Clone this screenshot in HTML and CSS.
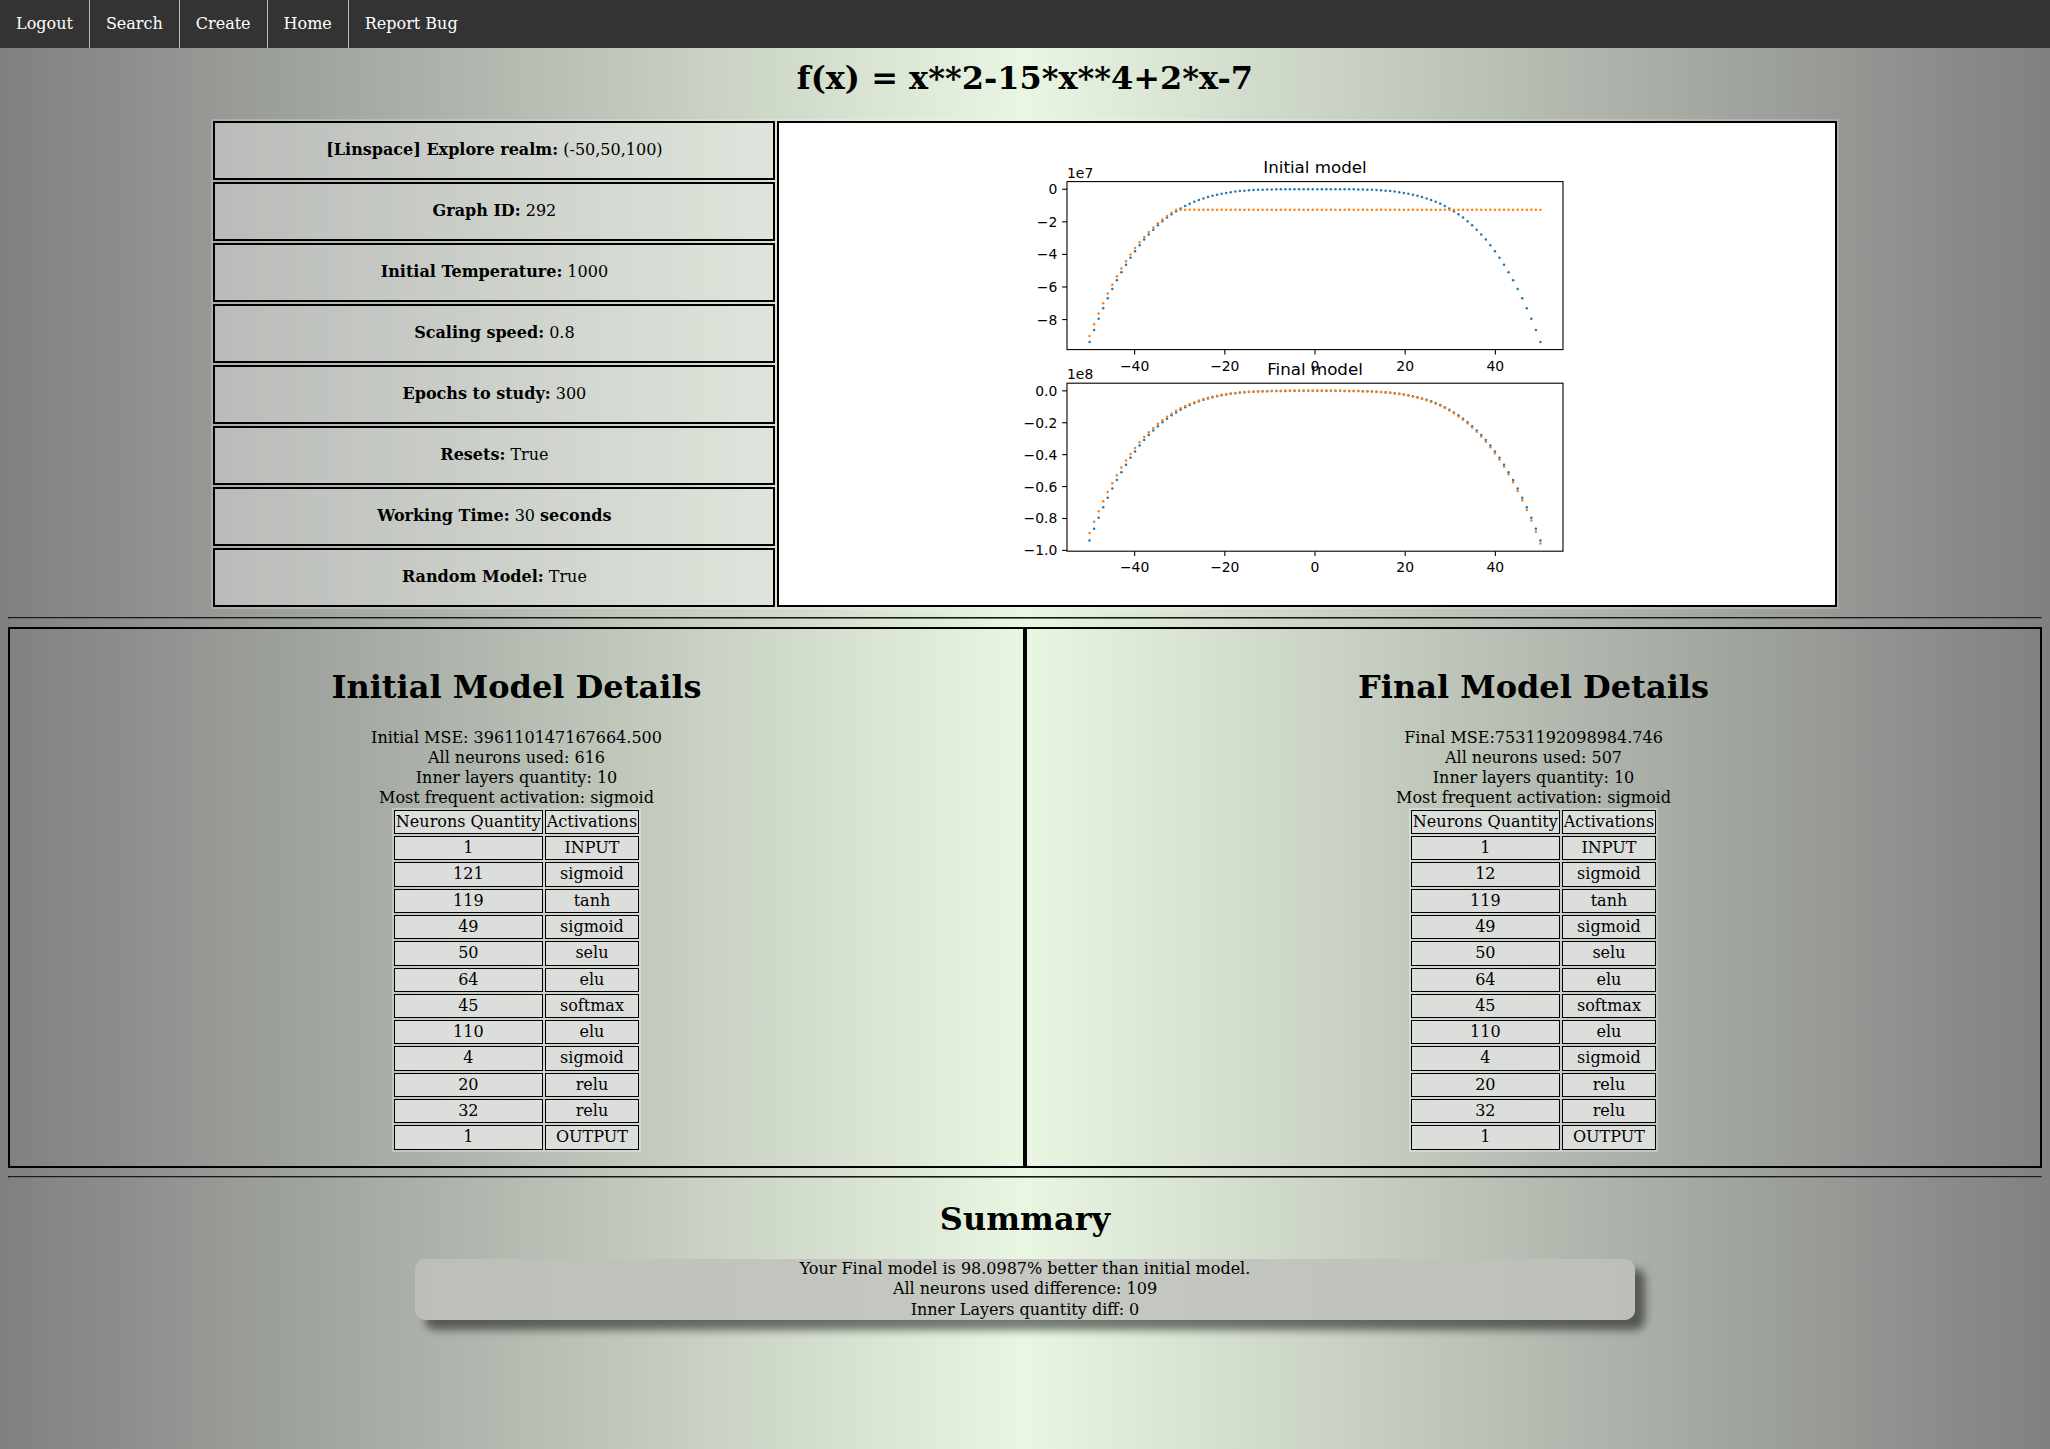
FILE: index.html
```html
<!DOCTYPE html>
<html>
<head>
<meta charset="utf-8">
<title>Graph 292</title>
<link rel="stylesheet" href="styles.css">
</head>
<body>
<ul class="nav">
  <li><a href="#">Logout</a></li>
  <li><a href="#">Search</a></li>
  <li><a href="#">Create</a></li>
  <li><a href="#">Home</a></li>
  <li><a href="#">Report Bug</a></li>
</ul>
<div class="page">
  <h1 class="title">f(x) = x**2-15*x**4+2*x-7</h1>
  <table class="info">
    <tr>
      <td class="param"><b>[Linspace] Explore realm:</b> (-50,50,100)</td>
      <td class="graph" rowspan="8">
        <svg id="plot" class="plot" width="640" height="480" viewBox="0 0 640 480" xmlns="http://www.w3.org/2000/svg">
          <rect x="0" y="0" width="640" height="480" fill="#fff"/>
        </svg>
      </td>
    </tr>
    <tr><td class="param"><b>Graph ID:</b> 292</td></tr>
    <tr><td class="param"><b>Initial Temperature:</b> 1000</td></tr>
    <tr><td class="param"><b>Scaling speed:</b> 0.8</td></tr>
    <tr><td class="param"><b>Epochs to study:</b> 300</td></tr>
    <tr><td class="param"><b>Resets:</b> True</td></tr>
    <tr><td class="param"><b>Working Time:</b> 30 <b>seconds</b></td></tr>
    <tr><td class="param"><b>Random Model:</b> True</td></tr>
  </table>
  <hr>
  <div class="details">
    <div class="model">
      <h1>Initial Model Details</h1>
      <div class="stats">Initial MSE: 396110147167664.500<br>All neurons used: 616<br>Inner layers quantity: 10<br>Most frequent activation: sigmoid</div>
      <table class="layers">
        <tr><td>Neurons Quantity</td><td>Activations</td></tr>
        <tr><td>1</td><td>INPUT</td></tr>
        <tr><td>121</td><td>sigmoid</td></tr>
        <tr><td>119</td><td>tanh</td></tr>
        <tr><td>49</td><td>sigmoid</td></tr>
        <tr><td>50</td><td>selu</td></tr>
        <tr><td>64</td><td>elu</td></tr>
        <tr><td>45</td><td>softmax</td></tr>
        <tr><td>110</td><td>elu</td></tr>
        <tr><td>4</td><td>sigmoid</td></tr>
        <tr><td>20</td><td>relu</td></tr>
        <tr><td>32</td><td>relu</td></tr>
        <tr><td>1</td><td>OUTPUT</td></tr>
      </table>
    </div>
    <div class="model">
      <h1>Final Model Details</h1>
      <div class="stats">Final MSE:7531192098984.746<br>All neurons used: 507<br>Inner layers quantity: 10<br>Most frequent activation: sigmoid</div>
      <table class="layers">
        <tr><td>Neurons Quantity</td><td>Activations</td></tr>
        <tr><td>1</td><td>INPUT</td></tr>
        <tr><td>12</td><td>sigmoid</td></tr>
        <tr><td>119</td><td>tanh</td></tr>
        <tr><td>49</td><td>sigmoid</td></tr>
        <tr><td>50</td><td>selu</td></tr>
        <tr><td>64</td><td>elu</td></tr>
        <tr><td>45</td><td>softmax</td></tr>
        <tr><td>110</td><td>elu</td></tr>
        <tr><td>4</td><td>sigmoid</td></tr>
        <tr><td>20</td><td>relu</td></tr>
        <tr><td>32</td><td>relu</td></tr>
        <tr><td>1</td><td>OUTPUT</td></tr>
      </table>
    </div>
  </div>
  <hr>
  <h1 class="sum-title">Summary</h1>
  <div class="summary">Your Final model is 98.0987% better than initial model.<br>All neurons used difference: 109<br>Inner Layers quantity diff: 0</div>
</div>
<script src="script.js"></script>
</body>
</html>
```

FILE: styles.css
```css
html {
  margin: 0;
}
body {
  margin: 0;
  min-height: 1449px;
  font-family: "DejaVu Serif", serif;
  font-size: 16px;
  line-height: 20.3px;
  color: #000;
  background: linear-gradient(to right, #808080 0%, #e9f6e2 50%, #808080 100%);
}
.nav {
  display: flex;
  margin: 0;
  padding: 0;
  list-style: none;
  background: #333;
}
.nav a {
  display: block;
  padding: 14px 16px;
  line-height: 20.4px;
  color: #fff;
  text-decoration: none;
  border-right: 1px solid #bbb;
}
.nav li:last-child a {
  border-right: none;
}
.page {
  padding: 0 8px;
}
h1 {
  font-size: 32px;
  line-height: 38px;
  text-align: center;
  margin: 21.44px 0;
}
.title {
  margin-top: 11px;
}
.info {
  width: 80%;
  margin: 0 auto;
  border-spacing: 2px;
  background: rgba(255, 255, 255, 0.2);
}
.info td {
  border: 2px solid #000;
  text-align: center;
}
.param {
  width: 558px;
  padding: 1px 0;
  background: rgba(255, 255, 255, 0.18);
}
.graph {
  padding: 1px 0;
  background: #fff;
}
.plot {
  display: block;
  margin: 0 auto;
}
.tick {
  font-family: "DejaVu Sans", sans-serif;
  font-size: 13.9px;
  fill: #000;
}
.ptitle {
  font-family: "DejaVu Sans", sans-serif;
  font-size: 16.7px;
  fill: #000;
}
hr {
  margin: 8px 0;
  border: 1px inset #6e6e6e;
}
.details {
  display: flex;
}
.model {
  flex: 1;
  border: 2px solid #000;
  padding: 18px 0 14.5px;
  text-align: center;
}
.stats {
  line-height: 20px;
}
.layers {
  margin: 0 auto;
  border-spacing: 2px;
  background: rgba(255, 255, 255, 0.3);
}
.layers td {
  border: 1px solid #000;
  padding: 1px;
  background: #dcdedb;
}
.summary {
  width: 60%;
  margin: 0 auto;
  text-align: center;
  border-radius: 10px;
  background: rgba(192, 193, 188, 0.85);
  box-shadow: 10px 10px 8px rgba(0, 0, 0, 0.5);
}
```

FILE: script.js
```js
(function () {
  var NS = 'http://www.w3.org/2000/svg';
  var svg = document.getElementById('plot');
  function f(x) { return x * x - 15 * Math.pow(x, 4) + 2 * x - 7; }
  var xs = [];
  for (var i = 0; i < 100; i++) xs.push(-50 + 100 * i / 99);
  var blue = xs.map(f);
  var oInit = xs.map(function (x) { return x < -30.5 ? f(x + 0.5) : -1.263e7; });
  var oFinal = xs.map(function (x) { return f(x + 0.45) * 0.985; });
  var L = 80, W = 496, H = 168;
  var xmin = -55, xmax = 55;
  function X(v) { return L + (v - xmin) / (xmax - xmin) * W; }
  function el(tag, attrs, parent, text) {
    var e = document.createElementNS(NS, tag);
    for (var k in attrs) e.setAttribute(k, attrs[k]);
    if (text != null) e.textContent = text;
    (parent || svg).appendChild(e);
    return e;
  }
  function panel(top, series, ticks, labels, offset, title) {
    var lo = Infinity, hi = -Infinity;
    series.forEach(function (s) { s.forEach(function (v) { lo = Math.min(lo, v); hi = Math.max(hi, v); }); });
    var m = (hi - lo) * 0.05, ymin = lo - m, ymax = hi + m;
    function Y(v) { return top + (ymax - v) / (ymax - ymin) * H; }
    var g = el('g', {});
    var colors = ['#1f77b4', '#ff7f0e'];
    series.forEach(function (s, k) {
      s.forEach(function (v, j) {
        el('circle', { cx: X(xs[j]).toFixed(2), cy: Y(v).toFixed(2), r: 1.25, fill: colors[k] }, g);
      });
    });
    el('rect', { x: L, y: top, width: W, height: H, fill: 'none', stroke: '#000', 'stroke-width': 1.1 }, g);
    ticks.forEach(function (t, j) {
      var y = Y(t);
      el('line', { x1: L - 4.9, x2: L, y1: y, y2: y, stroke: '#000', 'stroke-width': 1.1 }, g);
      el('text', { x: L - 9.7, y: y + 5, 'text-anchor': 'end', 'class': 'tick' }, g, labels[j]);
    });
    [-40, -20, 0, 20, 40].forEach(function (t) {
      var x = X(t);
      el('line', { x1: x, x2: x, y1: top + H, y2: top + H + 4.9, stroke: '#000', 'stroke-width': 1.1 }, g);
      el('text', { x: x, y: top + H + 21, 'text-anchor': 'middle', 'class': 'tick' }, g, t < 0 ? '\u2212' + (-t) : String(t));
    });
    el('text', { x: L, y: top - 4, 'class': 'tick' }, g, offset);
    el('text', { x: L + W / 2, y: top - 8.3, 'text-anchor': 'middle', 'class': 'ptitle' }, g, title);
  }
  panel(57.6, [blue, oInit], [0, -2e7, -4e7, -6e7, -8e7], ['0', '\u22122', '\u22124', '\u22126', '\u22128'], '1e7', 'Initial model');
  panel(259.2, [blue, oFinal], [0, -2e7, -4e7, -6e7, -8e7, -1e8], ['0.0', '\u22120.2', '\u22120.4', '\u22120.6', '\u22120.8', '\u22121.0'], '1e8', 'Final model');
})();
```
